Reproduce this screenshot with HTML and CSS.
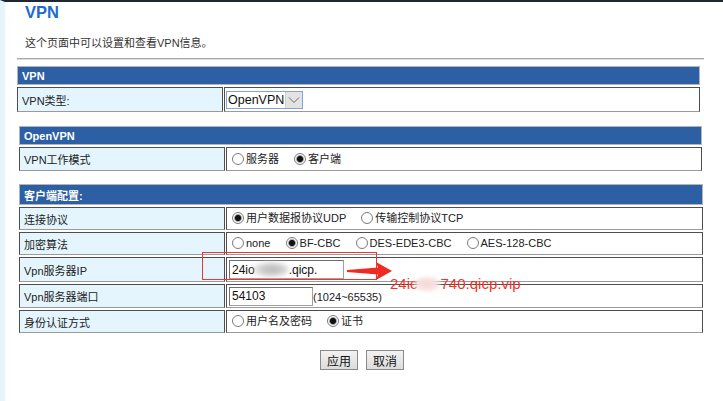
FILE: index.html
```html
<!DOCTYPE html>
<html lang="zh-CN">
<head>
<meta charset="utf-8">
<title>VPN</title>
<link rel="stylesheet" href="styles.css">
</head>
<body>
<div class="page">
  <h1 class="title">VPN</h1>
  <p class="desc">这个页面中可以设置和查看VPN信息。</p>
  <div class="rule"></div>

  <table class="grid t1">
    <colgroup><col class="c-lb"><col></colgroup>
    <tr><td class="hd" colspan="2">VPN</td></tr>
    <tr class="r25">
      <td class="lb">VPN类型:</td>
      <td class="val v-sel">
        <span class="select"><span class="sel-text">OpenVPN</span><span class="sel-arrow"><svg width="12" height="8" viewBox="0 0 12 8"><path d="M1 1.5 L6 6.5 L11 1.5" fill="none" stroke="#6e6e6e" stroke-width="1"/></svg></span></span>
      </td>
    </tr>
  </table>

  <table class="grid t2">
    <colgroup><col class="c-lb"><col></colgroup>
    <tr><td class="hd" colspan="2">OpenVPN</td></tr>
    <tr class="r24">
      <td class="lb">VPN工作模式</td>
      <td class="val">
        <span class="opt"><span class="rd"></span>服务器</span>
        <span class="opt"><span class="rd on"></span>客户端</span>
      </td>
    </tr>
  </table>

  <table class="grid t3">
    <colgroup><col class="c-lb"><col></colgroup>
    <tr><td class="hd hd3" colspan="2">客户端配置:</td></tr>
    <tr class="r23">
      <td class="lb">连接协议</td>
      <td class="val">
        <span class="opt"><span class="rd on"></span>用户数据报协议UDP</span>
        <span class="opt"><span class="rd"></span>传输控制协议TCP</span>
      </td>
    </tr>
    <tr class="r23">
      <td class="lb">加密算法</td>
      <td class="val">
        <span class="opt"><span class="rd"></span>none</span>
        <span class="opt"><span class="rd on"></span>BF-CBC</span>
        <span class="opt"><span class="rd"></span>DES-EDE3-CBC</span>
        <span class="opt"><span class="rd"></span>AES-128-CBC</span>
      </td>
    </tr>
    <tr class="r25">
      <td class="lb">Vpn服务器IP</td>
      <td class="val v-in">
        <span class="field f-ip">24io<span class="blur-gray"></span>.qicp.</span>
      </td>
    </tr>
    <tr class="r24">
      <td class="lb">Vpn服务器端口</td>
      <td class="val v-in">
        <span class="field f-port">54103</span><span class="hint">(1024~65535)</span>
      </td>
    </tr>
    <tr class="r23">
      <td class="lb">身份认证方式</td>
      <td class="val">
        <span class="opt"><span class="rd"></span>用户名及密码</span>
        <span class="opt"><span class="rd on"></span>证书</span>
      </td>
    </tr>
  </table>

  <div class="actions">
    <span class="btn">应用</span>
    <span class="btn">取消</span>
  </div>

  <div class="mark-box"></div>
  <svg class="mark-arrow" width="50" height="26" viewBox="0 0 50 26"><polygon points="2,12 33,9.5 31,4 47,13 31,22 33,16.5 2,14" fill="#ee2a22"/></svg>
  <div class="mark-text">24ic<span class="blur-pink"></span>740.qicp.vip</div>
</div>
</body>
</html>
```

FILE: styles.css
```css
* { box-sizing: border-box; }

html, body {
  margin: 0;
  padding: 0;
  background: #ffffff;
}

body {
  font-family: "Liberation Sans", "Noto Sans CJK SC", sans-serif;
  font-size: 11px;
  color: #222222;
}

.page {
  position: relative;
  width: 723px;
  height: 401px;
  border-top: 2px solid #1f2830;
  border-left: 5px solid #e6f5fc;
  overflow: hidden;
}

.title {
  margin: 0;
  padding: 0 0 0 20px;
  font-size: 16.5px;
  line-height: 20px;
  font-weight: bold;
  color: #1d6bcb;
}

.desc {
  margin: 14px 0 0 20px;
  font-size: 11px;
  line-height: 14px;
  color: #333333;
}

.rule {
  margin: 8px 0 0 12px;
  width: 687px;
  height: 2px;
  border-top: 1px solid #a9a9a9;
  border-bottom: 1px solid #dcdcdc;
}

.grid {
  border-collapse: separate;
  border-spacing: 1px 2px;
  table-layout: fixed;
}

.c-lb { width: 206px; }

.t1 { margin: 4px 0 0 11px; width: 685px; }
.t2 { margin: 10px 0 0 13px; width: 685px; }
.t3 { margin: 9px 0 0 13px; width: 686px; }

.grid td {
  padding: 0;
  vertical-align: middle;
}

.hd {
  height: 19px;
  padding: 0 0 0 4px !important;
  background: #2c5fa3;
  border: 1px solid #b4b4b4;
  color: #ffffff;
  font-weight: bold;
  font-size: 11px;
}

.hd3 { height: 21px; }

.lb {
  padding-left: 4px !important;
  background: #e4f5fd;
  border: 1px solid #4e4e4e;
  border-bottom-color: #9a9a9a;
  color: #222222;
  white-space: nowrap;
}

.val {
  padding-left: 5px !important;
  background: #ffffff;
  border: 1px solid #4e4e4e;
  border-bottom-color: #9a9a9a;
  white-space: nowrap;
}

.r23 td { height: 23px; }
.r24 td { height: 24px; }
.r25 td { height: 25px; }

.v-sel { padding-left: 1px !important; }
.v-in { padding-left: 2px !important; }

.opt {
  display: inline-flex;
  align-items: center;
  gap: 2px;
  margin-right: 12px;
  line-height: 14px;
}

.rd {
  display: inline-block;
  width: 12px;
  height: 12px;
  border: 1px solid #7b7b7b;
  border-radius: 50%;
  background: #ffffff;
}

.rd.on {
  background: radial-gradient(circle, #111111 0, #111111 2.6px, #9a9a9a 3.4px, #ffffff 4.4px);
}

.select {
  display: inline-flex;
  align-items: stretch;
  height: 18px;
  width: 77px;
  border: 1px solid #7ea6d6;
  background: #ffffff;
  vertical-align: middle;
}

.sel-text {
  flex: 1;
  font-size: 12.5px;
  line-height: 16px;
  padding-left: 1px;
  color: #111111;
}

.sel-arrow {
  width: 17px;
  display: flex;
  align-items: center;
  justify-content: center;
  background: #e3e3e3;
  border-left: 1px solid #cfcfcf;
}

.field {
  display: inline-block;
  height: 19px;
  padding-left: 2px;
  border: 1px solid #a0a0a0;
  border-top-color: #707070;
  border-left-color: #707070;
  font-size: 12px;
  line-height: 17px;
  color: #111111;
  vertical-align: middle;
  white-space: nowrap;
}

.f-ip { width: 115px; }
.f-port { width: 84px; }

.blur-gray {
  display: inline-block;
  width: 38px;
  height: 17px;
  margin: 0 0 0 -4px;
  vertical-align: -4px;
  border-radius: 50%;
  background: radial-gradient(ellipse at 55% 50%, #b8b8b8 0, #cfcfcf 40%, rgba(255,255,255,0) 75%);
  filter: blur(2px);
}

.hint {
  font-size: 11px;
  color: #222222;
  vertical-align: middle;
}

.actions {
  margin: 15px 0 0 14px;
  width: 686px;
  display: flex;
  justify-content: center;
  gap: 8px;
}

.btn {
  display: inline-flex;
  align-items: center;
  justify-content: center;
  width: 38px;
  height: 20px;
  border: 1px solid #8a8a8a;
  background: linear-gradient(#f2f2f2, #dcdcdc);
  font-size: 12px;
  color: #111111;
}

.mark-box {
  position: absolute;
  left: 197px;
  top: 250px;
  width: 175px;
  height: 28px;
  border: 1px solid #e8382f;
}

.mark-arrow {
  position: absolute;
  left: 340px;
  top: 256px;
}

.mark-text {
  position: absolute;
  left: 385px;
  top: 274px;
  font-size: 15px;
  line-height: 15px;
  color: #f2332b;
  white-space: nowrap;
}

.blur-pink {
  display: inline-block;
  width: 28px;
  height: 16px;
  margin-left: -5px;
  vertical-align: -3px;
  background: radial-gradient(ellipse, #f5d6d6 0, #f8e2e2 45%, rgba(255,255,255,0) 80%);
  filter: blur(1.5px);
}
```
